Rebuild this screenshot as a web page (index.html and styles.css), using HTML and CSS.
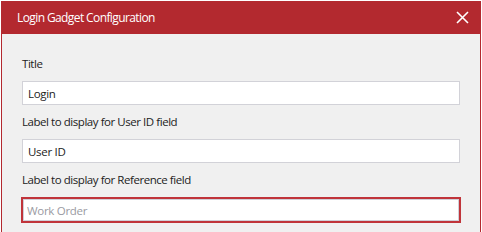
FILE: index.html
```html
<!DOCTYPE html>
<html lang="en">

<head>
  <meta charset="UTF-8">
  <title>Login Gadget Configuration</title>
  <link rel="stylesheet" href="styles.css">
</head>

<body>
  <div class="dialog">
    <div class="dialog-header">
      <span class="dialog-title">Login Gadget Configuration</span>
      <button class="close-button" aria-label="Close">
        <svg width="13" height="13" viewBox="0 0 13 13">
          <path d="M1 1 L12 12 M12 1 L1 12" stroke="#fff" stroke-width="1.6" fill="none" />
        </svg>
      </button>
    </div>
    <div class="dialog-body">
      <div class="field">
        <label for="title">Title</label>
        <input type="text" id="title" value="Login">
      </div>
      <div class="field">
        <label for="userIdLabel">Label to display for User ID field</label>
        <input type="text" id="userIdLabel" value="User ID">
      </div>
      <div class="field">
        <label for="referenceLabel">Label to display for Reference field</label>
        <input type="text" id="referenceLabel" class="focused" placeholder="Work Order">
      </div>
    </div>
  </div>
</body>

</html>
```

FILE: styles.css
```css
body {
  margin: 0;
  padding: 1px 1px 0 1px;
  background-color: white;
  font-family: "Open Sans", "Noto Sans", sans-serif;
}

.dialog {
  background-color: #f0f0f0;
  border-left: 1px solid #b3292f;
  border-right: 1px solid #b3292f;
  height: 231px;
}

.dialog-header {
  background-color: #b3292f;
  height: 33px;
  display: flex;
  align-items: center;
  justify-content: space-between;
  padding: 0 12px 0 16px;
  margin: 0 -1px;
}

.dialog-title {
  color: white;
  font-size: 12px;
  letter-spacing: -0.6px;
}

.close-button {
  background: none;
  border: none;
  padding: 0;
  display: flex;
  cursor: pointer;
}

.dialog-body {
  padding: 23px 20px 0 20px;
}

.field {
  display: flex;
  flex-direction: column;
  margin-bottom: 10px;
}

.field label {
  font-size: 11.5px;
  letter-spacing: -0.45px;
  color: #222;
  line-height: 14px;
  margin-bottom: 10px;
}

.field input {
  height: 24px;
  box-sizing: border-box;
  border: 1px solid #d2d2d8;
  background-color: white;
  padding: 0 5px;
  font-family: inherit;
  font-size: 11.5px;
  letter-spacing: -0.3px;
  color: #222;
  outline: none;
}

.field input.focused {
  height: 26px;
  border: 2px solid #c0343a;
  box-shadow: inset 0 0 0 1px #d0d0d8;
  margin: 0 -1px;
  padding: 0 4px;
}

.field input::placeholder {
  color: #9a9aa2;
}
```
